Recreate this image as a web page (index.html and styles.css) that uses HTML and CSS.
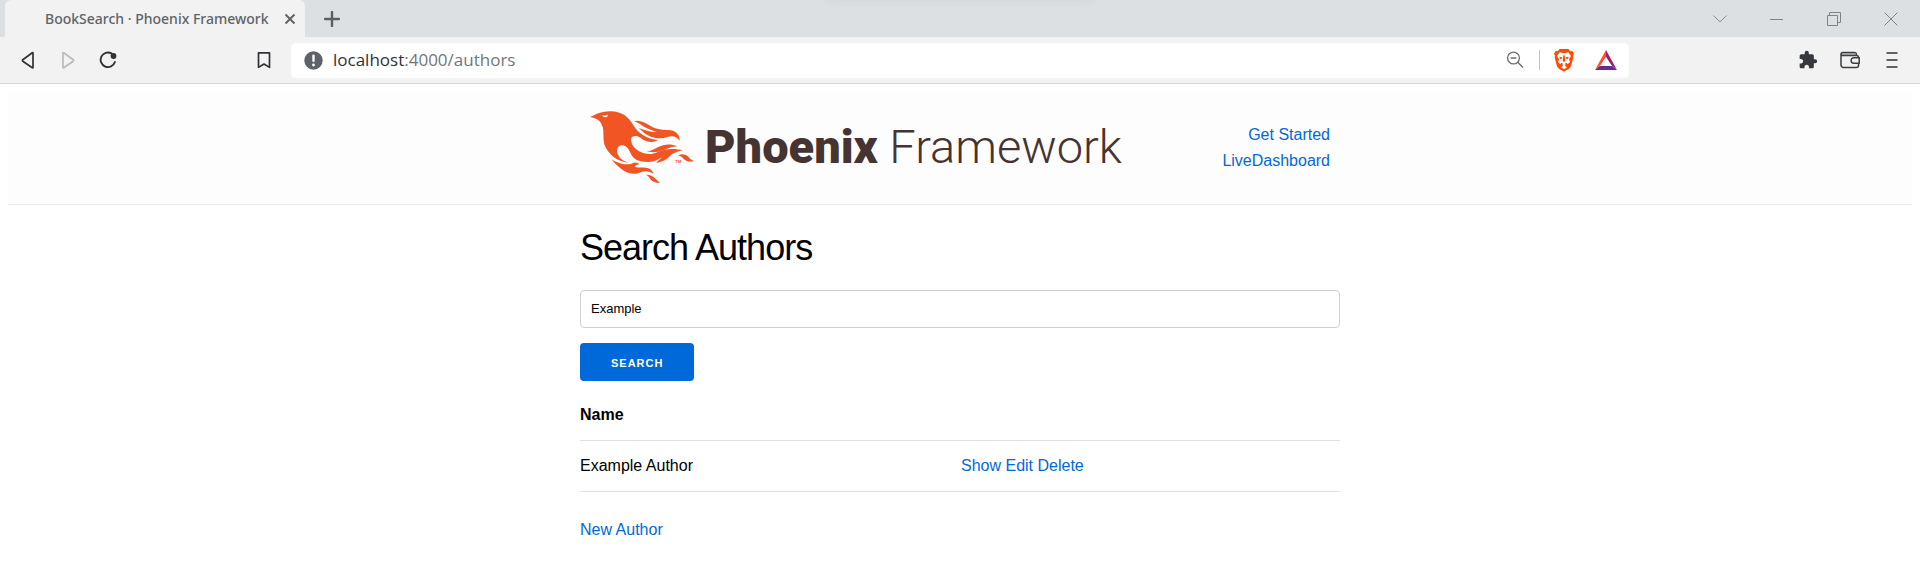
FILE: index.html
```html
<!DOCTYPE html>
<html lang="en">
<head>
<meta charset="utf-8">
<title>BookSearch · Phoenix Framework</title>
<link rel="stylesheet" href="styles.css">
</head>
<body>
<div class="browser">
  <div class="tabstrip">
    <div class="tab">
      <span class="tab-title">BookSearch · Phoenix Framework</span>
      <button class="tab-close" aria-label="Close tab"><svg width="12" height="12" viewBox="0 0 12 12"><path d="M1.500 1.500l9 9M10.500 1.500l-9 9" stroke="#5f6368" stroke-width="2" fill="none"/></svg></button>
    </div>
    <button class="new-tab" aria-label="New tab"><svg width="16" height="16" viewBox="0 0 16 16"><path d="M8 1v14M1 8h14" stroke="#5b5f63" stroke-width="2.400" stroke-linecap="round"/></svg></button>
    <div class="window-controls">
      <button aria-label="Search tabs"><svg width="14" height="14" viewBox="0 0 14 14"><path d="M.5 3.500l6.500 6.500 6.500-6.500" stroke="#8b8e91" fill="none"/></svg></button>
      <button aria-label="Minimize"><svg width="14" height="14" viewBox="0 0 14 14"><path d="M0 7.500h13" stroke="#808386"/></svg></button>
      <button aria-label="Restore"><svg width="14" height="14" viewBox="0 0 14 14"><path d="M.5 3.500h10v10H.5zM2.500 3V.5h11v10H11" stroke="#808386" fill="none"/></svg></button>
      <button aria-label="Close"><svg width="14" height="14" viewBox="0 0 14 14"><path d="M.5.5l13 13M13.500.5l-13 13" stroke="#808386" fill="none"/></svg></button>
    </div>
  </div>
  <div class="toolbar">
    <button aria-label="Back"><svg width="20" height="20" viewBox="0 0 20 20"><path d="M15 3v14.500a.4.400 0 0 1-.7.300L4.800 11.200a1 1 0 0 1 0-1.500L14.300 2.700a.4.400 0 0 1 .7.300z" stroke="#303336" stroke-width="1.700" fill="none" stroke-linejoin="round"/></svg></button>
    <button aria-label="Forward" disabled><svg width="20" height="20" viewBox="0 0 20 20"><path d="M5 3v14.500a.4.400 0 0 0 .7.300l9.500-6.600a1 1 0 0 0 0-1.500L5.700 2.700A.4.400 0 0 0 5 3z" stroke="#bbb" stroke-width="1.700" fill="none" stroke-linejoin="round"/></svg></button>
    <button aria-label="Reload"><svg width="20" height="20" viewBox="0 0 20 20"><path d="M13.500 3.400A7.300 7.300 0 1 0 16.900 12" stroke="#303336" stroke-width="1.900" fill="none" stroke-linecap="round"/><circle cx="15.500" cy="6" r="2.900" fill="#303336"/></svg></button>
    <button class="bookmark" aria-label="Bookmark"><svg width="20" height="20" viewBox="0 0 20 20"><path d="M4.500 2.800h11v14.600L10 14l-5.500 3.400z" stroke="#303336" stroke-width="1.700" fill="none" stroke-linejoin="round"/></svg></button>
    <div class="urlbar">
      <svg width="19" height="19" viewBox="0 0 19 19"><circle cx="9.500" cy="9.500" r="9.200" fill="#5f6368"/><path d="M9.500 4.700v5" stroke="#fff" stroke-width="2.400" stroke-linecap="round"/><circle cx="9.500" cy="14" r="1.400" fill="#fff"/></svg>
      <span class="url">localhost<span class="url-rest">:4000/authors</span></span>
      <button aria-label="Zoom out"><svg width="18" height="18" viewBox="0 0 18 18"><circle cx="7.500" cy="7" r="5.900" stroke="#6d7073" stroke-width="1.300" fill="none"/><path d="M11.800 11.300l5.200 5.200M4.600 7h5.800" stroke="#6d7073" stroke-width="1.500"/></svg></button>
      <span class="divider"></span>
      <button aria-label="Brave Shields"><svg width="20" height="24" viewBox="0 0 60 72"><path d="M17 3h26l6 7 6-1 5 8-3 6 1 5-7 27c-2 7-12 11-21 16C21 66 11 62 9 55L2 28l1-5-3-6 5-8 6 1z" fill="#ff4a05"/><path d="M17 13l13 3 13-3 8 11-6 10 3 8-7 7-4-5-4 3 2 5-5 3h0l-5-3 2-5-4-3-4 5-7-7 3-8-6-10z" fill="#fff"/><path d="M21 58l9-6 9 6-9 6z" fill="#fff"/><path d="M28 22h4l2 16-4 5-4-5zM16 26l9 2-2 4-5 1zM44 26l-9 2 2 4 5 1z" fill="#ff4a05"/></svg></button>
      <button aria-label="Rewards"><svg width="22" height="20" viewBox="0 0 66 60"><path d="M33 0v20L17 45 0 60z" fill="#ff4f2d"/><path d="M33 0l33 60-17-15-16-25z" fill="#9e1f63"/><path d="M0 60l14-12h38l14 12z" fill="#662d91"/></svg></button>
    </div>
    <div class="extensions">
      <button aria-label="Extensions"><svg width="20" height="20" viewBox="0 0 24 24"><path d="M20.500 11H19V7c0-1.100-.9-2-2-2h-4V3.500a2.500 2.500 0 0 0-5 0V5H4c-1.100 0-2 .9-2 2v3.800h1.500c1.490 0 2.700 1.210 2.700 2.700s-1.210 2.700-2.700 2.700H2V20c0 1.100.9 2 2 2h3.800v-1.500c0-1.490 1.210-2.700 2.700-2.700s2.700 1.210 2.700 2.700V22H17c1.100 0 2-.9 2-2v-4h1.500a2.500 2.500 0 0 0 0-5z" fill="#35393d"/></svg></button>
      <button aria-label="Wallet"><svg width="20" height="18" viewBox="0 0 20 18"><path d="M1 3v11a2.500 2.500 0 0 0 2.500 2.500h13a2 2 0 0 0 2-2V6.500a2 2 0 0 0-2-2H2.500A1.500 1.500 0 0 1 1 3a1.500 1.500 0 0 1 1.500-1.500H14A2.500 2.500 0 0 1 16.500 4" stroke="#3b3f43" stroke-width="1.500" fill="none"/><path d="M2 3h14" stroke="#8a8d90" stroke-width="1.500"/><path d="M19.200 6.800h-5.400a2.700 2.700 0 0 0 0 5.400h5.400z" fill="#f2f2f2" stroke="#3b3f43" stroke-width="1.500"/></svg></button>
      <button aria-label="Menu"><svg width="12" height="18" viewBox="0 0 12 18"><path d="M.5 2h11M.5 9h11M.5 16h11" stroke="#303336" stroke-width="1.700"/></svg></button>
    </div>
  </div>
</div>
<div class="page">
  <header class="site-header">
    <div class="container header-inner">
      <a class="logo" href="#" aria-label="Phoenix Framework">
        <svg class="bird" width="120" height="84" viewBox="15 20 360 252">
          <g fill="#f15524">
            <path d="M30 53C44 49 56 36 92 36C128 37 146 54 160 78C174 102 198 118 232 122C222 132 198 129 182 116C168 106 152 110 153 122C155 148 185 166 214 164C235 160 250 148 275 149C290 149 300 151 308 153C290 158 282 160 272 168C262 180 245 190 228 190C235 184 240 180 246 174C225 191 192 191 170 182C152 172 150 152 140 143C128 133 112 137 111 152C111 168 122 184 146 190C112 188 84 165 73 135C68 110 73 92 66 78C60 62 48 56 30 53Z"/>
            <path d="M162 66C175 60 195 68 208 78C225 90 245 92 265 92C285 92 300 105 299 124C290 112 278 108 262 113C240 122 210 115 192 100C183 92 178 88 176 86C195 92 215 100 230 98C215 92 205 90 195 84C185 78 176 70 162 66Z"/>
            <path d="M197 155C212 158 220 150 235 143C252 134 272 132 292 141C275 142 262 148 250 153C232 160 212 160 197 155Z"/>
            <path d="M294 168C305 162 318 164 325 172C330 180 338 183 343 185C332 188 320 188 312 180C308 174 302 170 294 168Z"/>
            <path d="M95 180C110 191 135 199 155 193C165 188 174 188 178 196C172 194 165 197 165 203C185 208 212 196 221 224C205 213 192 214 174 222C150 228 130 215 118 204C108 196 100 188 95 180Z"/>
            <path d="M198 226C212 226 222 232 228 240L240 251C225 250 215 246 210 238C207 232 203 228 198 226Z"/>
          </g>
          <path d="M66 48C74 50 78 48 84 46C84 54 74 56 68 51Z" fill="#fdfdfd"/>
          <text class="tm" x="285" y="191">TM</text>
        </svg>
        <span class="wordmark"><b>Phoenix</b> Framework</span>
      </a>
      <nav class="site-nav">
        <a href="#">Get Started</a>
        <a href="#">LiveDashboard</a>
      </nav>
    </div>
  </header>
  <main class="container">
    <h1>Search Authors</h1>
    <form>
      <input class="field" type="text" value="Example" aria-label="Author name">
      <button class="submit" type="button">Search</button>
    </form>
    <table>
      <thead><tr><th>Name</th><th></th></tr></thead>
      <tbody><tr><td>Example Author</td><td><a href="#">Show</a> <a href="#">Edit</a> <a href="#">Delete</a></td></tr></tbody>
    </table>
    <a href="#">New Author</a>
  </main>
</div>
</body>
</html>
```
FILE: styles.css
```css
* { box-sizing: border-box; }
body {
  margin: 0;
  background: #fff;
  color: #000;
  font: 16px/26px "Liberation Sans", Arial, sans-serif;
}
a { color: #0069d9; text-decoration: none; }

.browser { font-family: "Noto Sans", "Open Sans", sans-serif; }
.browser button {
  display: flex;
  align-items: center;
  justify-content: center;
  padding: 0;
  border: 0;
  background: none;
}
.tabstrip {
  position: relative;
  display: flex;
  height: 37px;
  padding: 0 1px 0 5px;
  background: #dce0e3;
  overflow: hidden;
}
.tabstrip::before {
  content: "";
  position: absolute;
  top: -8px;
  left: 43%;
  width: 14%;
  height: 6px;
  box-shadow: 0 0 12px rgba(0, 0, 0, .1);
}
.tab {
  display: flex;
  align-items: center;
  justify-content: space-between;
  width: 300px;
  padding: 0 4px 0 40px;
  border-radius: 6px 6px 0 0;
  background: #f2f2f2;
}
.tab-title { color: #5f6368; font-size: 14px; font-weight: 500; white-space: nowrap; }
.tab-close { width: 22px; height: 22px; }
.new-tab { width: 54px; }
.window-controls { display: flex; margin-left: auto; }
.window-controls button { width: 57px; }

.toolbar {
  display: flex;
  align-items: center;
  height: 47px;
  padding: 0 7px 0 8px;
  border-bottom: 1px solid #d5d5d5;
  background: #f2f2f2;
}
.toolbar button { flex: none; width: 40px; height: 35px; }
.toolbar .bookmark { margin: 0 7px 0 116px; }
.urlbar {
  display: flex;
  flex: 1;
  align-items: center;
  height: 35px;
  padding: 0 2px 0 13px;
  border-radius: 5px;
  background: #fff;
}
.url {
  flex: 1;
  margin-left: 10px;
  color: #303336;
  font-family: "Open Sans", "Noto Sans", sans-serif;
  font-size: 17px;
}
.url-rest { color: #72767a; }
.toolbar .urlbar button, .toolbar .extensions button { width: 42px; }
.divider { width: 1px; height: 20px; margin: 0 3px; background: #c4c4c4; }
.extensions { display: flex; margin-left: 158px; }

.page { padding: 8px; }
.container { max-width: 760px; margin: 0 auto; }
.site-header {
  border-bottom: 1px solid #eaeaea;
  background: #fdfdfd;
}
.header-inner {
  display: flex;
  align-items: center;
  justify-content: space-between;
  padding: 14px 10px 14px 5px;
}
.logo { display: flex; align-items: center; color: #463432; }
.bird { flex: none; }
.tm { fill: #f15524; font: bold 13px "Liberation Sans", sans-serif; }
.wordmark {
  padding-bottom: 2px;
  font: 300 47px/56px Roboto, sans-serif;
  white-space: nowrap;
}
.wordmark b { font-weight: 900; }
.site-nav { display: flex; flex-direction: column; text-align: right; }

h1 {
  margin: 20px 0;
  font-size: 36px;
  font-weight: 400;
  line-height: 45px;
  letter-spacing: -1px;
}
.field {
  display: block;
  width: 100%;
  height: 38px;
  margin-bottom: 15px;
  padding: 6px 10px 8px;
  border: 1px solid #d1d1d1;
  border-radius: 4px;
  background: #fff;
  font: 13px "Liberation Sans", Arial, sans-serif;
}
.submit {
  display: block;
  height: 38px;
  margin-bottom: 9px;
  padding: 2px 31px 0;
  border: 0;
  border-radius: 4px;
  background: #0069d9;
  color: #fff;
  font: bold 11px "Liberation Sans", Arial, sans-serif;
  letter-spacing: 1px;
  text-transform: uppercase;
}
table {
  width: 100%;
  margin-bottom: 25px;
  border-collapse: separate;
  border-spacing: 0;
  table-layout: fixed;
}
th, td {
  padding: 12px 0;
  border-bottom: 1px solid #e1e1e1;
  text-align: left;
}
th + th, td + td { padding-left: 1px; }
```
